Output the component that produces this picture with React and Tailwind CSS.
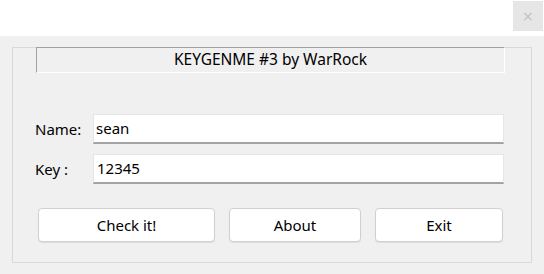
export default function App() {
    return (
        <div
            className="w-[544px] h-[274px] bg-[#f0f0f0] flex flex-col text-black"
            style={{ fontFamily: '"Noto Sans", "Open Sans", sans-serif' }}
        >
            {/* title bar */}
            <div className="h-[36px] bg-white flex justify-end items-start shrink-0">
                <div className="mt-[1px] mr-[1px] w-[30px] h-[30px] bg-[#e6e6e6] flex items-center justify-center text-[#c4c4c4] text-[18px] leading-none">
                    ×
                </div>
            </div>

            <div className="mx-[12px] mt-[11px] h-[216px] border border-[#d9d9d9] flex flex-col">
                <div className="-mt-px ml-[23px] w-[469px] h-[26px] border border-t-[#a0a0a0] border-l-[#a0a0a0] border-b-white border-r-white flex items-center justify-center text-[15.5px]">
                    KEYGENME #3 by WarRock
                </div>

                <div className="mt-[41px] pl-[22px] flex flex-col gap-[10px]">
                    <div className="flex items-center">
                        <span className="w-[58px] text-[15px]">Name:</span>
                        <div className="w-[411px] h-[30px] bg-white border border-[#e6e6e6] border-b-2 border-b-[#a3a3a3] flex items-center pl-[2px] text-[15px]">
                            sean
                        </div>
                    </div>
                    <div className="flex items-center">
                        <span className="w-[58px] text-[15px]">Key :</span>
                        <div className="w-[411px] h-[30px] bg-white border border-[#e6e6e6] border-b-2 border-b-[#a3a3a3] flex items-center pl-[3px] text-[15px]">
                            12345
                        </div>
                    </div>
                </div>

                <div className="mt-[24px] pl-[25px] flex gap-[14px]">
                    <button className="w-[177px] h-[34px] bg-white border border-[#d0d0d0] rounded-[4px] shadow-[0_1px_1px_rgba(0,0,0,0.08)] text-[15px]">
                        Check it!
                    </button>
                    <button className="w-[132px] h-[34px] bg-white border border-[#d0d0d0] rounded-[4px] shadow-[0_1px_1px_rgba(0,0,0,0.08)] text-[15px]">
                        About
                    </button>
                    <button className="w-[128px] h-[34px] bg-white border border-[#d0d0d0] rounded-[4px] shadow-[0_1px_1px_rgba(0,0,0,0.08)] text-[15px]">
                        Exit
                    </button>
                </div>
            </div>
        </div>
    );
}
